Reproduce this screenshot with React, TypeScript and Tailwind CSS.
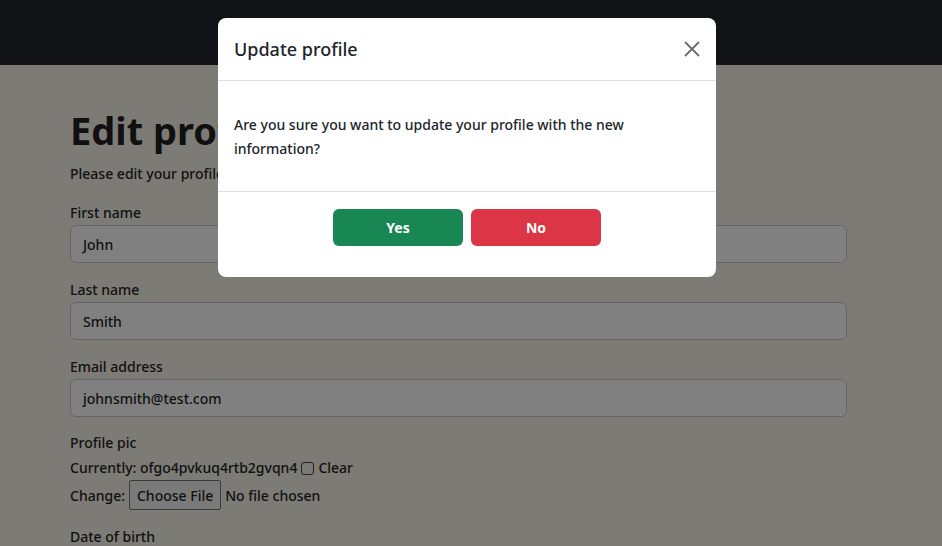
import React from "react";

export default function App() {
  const font = { fontFamily: '"Noto Sans", "DejaVu Sans", sans-serif' };
  return (
    <div className="relative w-[942px] h-[546px] overflow-hidden bg-[#7d7b76] text-[#111]" style={font}>
      <div className="h-[65px] bg-[#121316]" />
      <div className="px-[70px] pt-[41px]">
        <h1 className="text-[38px] leading-[48px] font-bold text-[#101010]">Edit profile</h1>
        <p className="mt-[10px] text-[14px] leading-[20px] font-medium text-[#101010]">Please edit your profile information below</p>
        <div className="mt-[19px] w-[777px] flex flex-col text-[14px] font-medium text-[#101010]">
          <label className="leading-[20px]">First name</label>
          <div className="mt-[2px] h-[38px] rounded-[6px] border border-[#646568] bg-[#808080] px-[12px] flex items-center">John</div>
          <label className="mt-[17px] leading-[20px]">Last name</label>
          <div className="mt-[2px] h-[38px] rounded-[6px] border border-[#646568] bg-[#808080] px-[12px] flex items-center">Smith</div>
          <label className="mt-[17px] leading-[20px]">Email address</label>
          <div className="mt-[2px] h-[38px] rounded-[6px] border border-[#646568] bg-[#808080] px-[12px] flex items-center">johnsmith@test.com</div>
          <label className="mt-[16px] leading-[20px]">Profile pic</label>
          <div className="mt-[5px] leading-[20px] flex items-center gap-[4px]">
            <span>Currently: ofgo4pvkuq4rtb2gvqn4</span>
            <span className="inline-block w-[13px] h-[13px] rounded-[3px] border border-[#222]" />
            <span>Clear</span>
          </div>
          <div className="mt-[2px] flex items-center gap-[4px]">
            <span>Change:</span>
            <span className="h-[30px] px-[7px] flex items-center rounded-[2px] border border-[#3b3b3b] bg-[#7a7a7a]">Choose File</span>
            <span>No file chosen</span>
          </div>
          <label className="mt-[17px] leading-[20px]">Date of birth</label>
        </div>
      </div>

      <div className="absolute left-[218px] top-[18px] w-[498px] h-[259px] bg-white rounded-[8px] flex flex-col">
        <div className="h-[63px] border-b border-[#dee2e6] flex items-center justify-between pl-[16px] pr-[14px]">
          <span className="text-[18px] font-medium text-[#212529]">Update profile</span>
          <svg width="20" height="20" viewBox="0 0 20 20" fill="none" stroke="#6b6b6b" strokeWidth="1.8">
            <path d="M3 3 L17 17 M17 3 L3 17" />
          </svg>
        </div>
        <div className="h-[111px] border-b border-[#dee2e6] px-[16px] flex items-center pt-[2px]">
          <p className="text-[14px] leading-[24px] font-medium text-[#212529]">Are you sure you want to update your profile with the new information?</p>
        </div>
        <div className="flex-1 flex items-start justify-center pt-[17px] gap-[8px]">
          <button className="w-[130px] h-[37px] rounded-[6px] bg-[#198754] text-white text-[14px] font-bold">Yes</button>
          <button className="w-[130px] h-[37px] rounded-[6px] bg-[#dc3545] text-white text-[14px] font-bold">No</button>
        </div>
      </div>
    </div>
  );
}
